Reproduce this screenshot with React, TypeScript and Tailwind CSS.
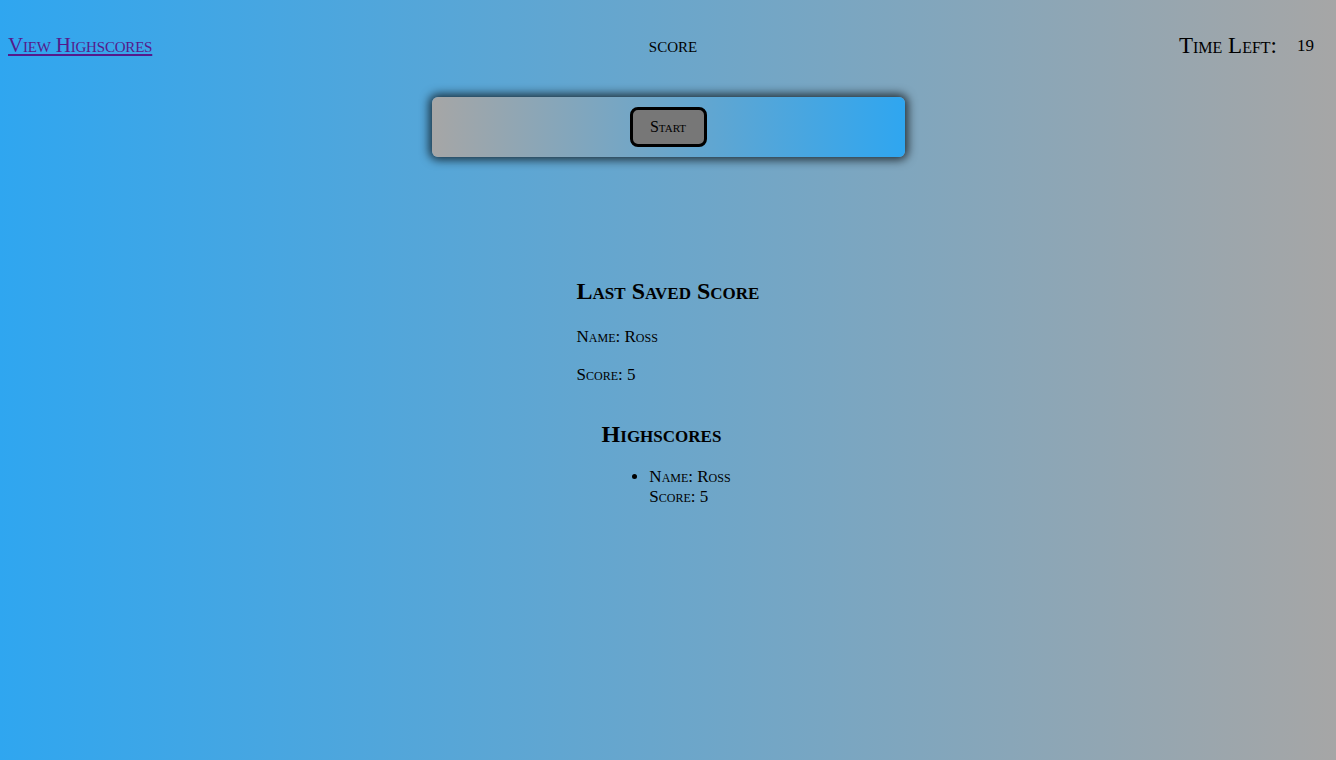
import React from "react";

export default function App() {
  const font = { fontFamily: '"Liberation Serif", "DejaVu Serif", serif', fontVariant: "small-caps" as const };
  return (
    <div
      className="min-h-[760px] w-full bg-[linear-gradient(to_right,#2fa6f0,#a6a6a6)] text-black"
      style={font}
    >
      <header className="flex items-center justify-between h-[92px] px-2">
        <div className="w-[300px]">
          <a href="#" className="text-[21px] tracking-[-0.2px] text-[#551a8b] underline">View Highscores</a>
        </div>
        <div className="text-[21px] ml-[10px]">score</div>
        <div className="flex items-center justify-end w-[300px] gap-5 pr-[14px]">
          <span className="text-[23px]">Time Left:</span>
          <span className="text-[17px]">19</span>
        </div>
      </header>
      <div className="flex justify-center mt-[5px]">
        <div className="w-[473px] h-[60px] rounded-md bg-[linear-gradient(to_right,#a6a6a6,#2fa6f0)] shadow-[0_0_10px_3px_rgba(0,0,0,0.7)] flex items-center justify-center">
          <button className="w-[77px] h-[40px] bg-[#777777] border-[3px] border-black rounded-lg text-[16px] leading-none">Start</button>
        </div>
      </div>
      <div className="flex flex-col items-center mt-[119px]">
        <div className="text-left">
          <h2 className="text-[24px] font-bold leading-tight">Last Saved Score</h2>
          <p className="text-[17px] mt-[18px]">Name: Ross</p>
          <p className="text-[17px] mt-[12px]">Score: 5</p>
        </div>
        <h2 className="text-[24px] font-bold leading-tight mt-[32px] mr-[13px]">Highscores</h2>
        <ul className="list-disc pl-[16px] mt-[18px] text-[17px] leading-[20px] ml-[28px]">
          <li>
            Name: Ross
            <br />
            Score: 5
          </li>
        </ul>
      </div>
    </div>
  );
}
